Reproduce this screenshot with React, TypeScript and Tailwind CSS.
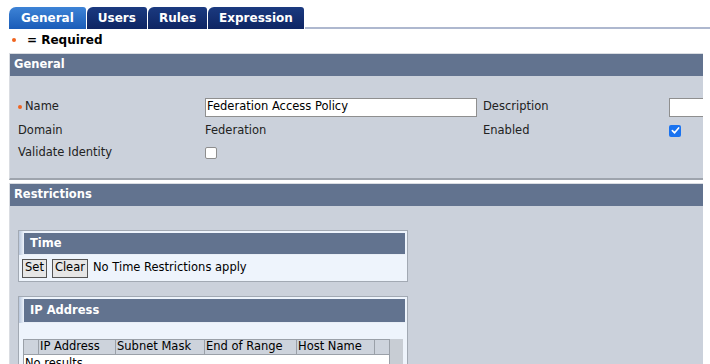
import React from 'react';

const tabs = ['General', 'Users', 'Rules', 'Expression'];

function Tabs() {
    return (
        <div className="flex items-end pl-[9px] pt-[6px] h-[29px] text-[12px]">
            {tabs.map((t, i) => (
                <div
                    key={t}
                    className={
                        i === 0
                            ? 'h-[22px] px-[12px] flex items-center rounded-tl-[7px] rounded-tr-[3px] bg-[linear-gradient(#3d83d6,#1a5cb8)] text-white font-bold mr-px'
                            : 'h-[22px] px-[11px] flex items-center rounded-tl-[6px] rounded-tr-[3px] bg-[linear-gradient(#1b3a80,#0e2563)] text-white font-bold mr-px'
                    }
                >
                    {t}
                </div>
            ))}
            <div className="flex-1 h-[22px] border-b-2 border-[#aeb8cf]" />
        </div>
    );
}

function Checkbox({ checked }: { checked?: boolean }) {
    if (checked) {
        return (
            <span className="w-[12px] h-[12px] rounded-[2px] bg-[#1a73f0] flex items-center justify-center">
                <svg width="9" height="9" viewBox="0 0 10 10">
                    <path d="M1.5 5.2 L4 7.6 L8.5 2.2" fill="none" stroke="white" strokeWidth="1.8" strokeLinecap="round" strokeLinejoin="round" />
                </svg>
            </span>
        );
    }
    return <span className="w-[12px] h-[12px] rounded-[2px] bg-white border border-[#8e8e8e]" />;
}

function SubPanel({ title, headH, children }: { title: string; headH: string; children: React.ReactNode }) {
    return (
        <div className="w-[390px] border border-[#a2a9b3] bg-[#eef4fc]">
            <div className="pt-[2px] pr-[2px] pl-[5px] bg-[linear-gradient(to_right,#b9c7dc,#eef4fc_5px)]">
                <div className={`${headH} bg-[#62738f] flex items-center pl-[6px] text-white font-bold border-b border-[#e8eef6]`}>
                    {title}
                </div>
            </div>
            {children}
        </div>
    );
}

export default function App() {
    return (
        <div className="w-[710px] h-[364px] overflow-hidden bg-white text-[11.5px] text-[#222] font-['DejaVu_Sans',Verdana,sans-serif]">
            <Tabs />

            <div className="h-[24px] flex items-center pl-[12px] pb-[2px] font-bold text-black text-[12px]">
                <span className="w-[4px] h-[4px] rounded-full bg-[#f0641e] mr-[11px]" />
                = Required
            </div>

            {/* General */}
            <div className="ml-[9px] w-[694px] border-l border-t border-[#dadde2] border-b-2 border-b-[#9ea4ad] overflow-hidden">
                <div className="h-[22px] bg-[#62738f] flex items-center pl-[4px] text-white font-bold">General</div>
                <div className="bg-[#cbd1db] pt-[19px] pb-[14px] pl-[8px]">
                    <div className="grid grid-cols-[187px_278px_186px_1fr]">
                        <div className="h-[24px] flex items-center">
                            <span className="w-[4px] h-[4px] rounded-full bg-[#f0641e] mr-[3px]" />
                            Name
                        </div>
                        <div className="h-[24px] flex items-center">
                            <div className="w-[272px] h-[19px] bg-white border border-[#8f8f8f] flex items-center pl-[1px] text-black">
                                Federation Access Policy
                            </div>
                        </div>
                        <div className="h-[24px] flex items-center">Description</div>
                        <div className="h-[24px] flex items-center">
                            <div className="w-[60px] h-[19px] bg-white border border-[#8f8f8f]" />
                        </div>

                        <div className="h-[23px] flex items-center">Domain</div>
                        <div className="h-[23px] flex items-center">Federation</div>
                        <div className="h-[23px] flex items-center">Enabled</div>
                        <div className="h-[23px] flex items-center"><Checkbox checked /></div>

                        <div className="h-[22px] flex items-center">Validate Identity</div>
                        <div className="h-[22px] flex items-center"><Checkbox /></div>
                        <div />
                        <div />
                    </div>
                </div>
            </div>

            {/* Restrictions */}
            <div className="mt-[3px] ml-[9px] w-[694px] border-l border-t border-[#dadde2]">
                <div className="h-[22px] bg-[#62738f] flex items-center pl-[4px] text-white font-bold">Restrictions</div>
                <div className="bg-[#cbd1db] h-[200px] pt-[24px] pl-[8px] flex flex-col gap-[14px]">
                    <SubPanel title="Time" headH="h-[22px]">
                        <div className="h-[26px] flex items-center gap-[5px] pl-[3px]">
                            <button className="h-[19px] px-[2px] bg-[#e6e6e6] border border-[#555] leading-none text-black">Set</button>
                            <button className="h-[19px] px-[2px] bg-[#e6e6e6] border border-[#555] leading-none text-black">Clear</button>
                            <span className="text-black">No Time Restrictions apply</span>
                        </div>
                    </SubPanel>

                    <SubPanel title="IP Address" headH="h-[24px]">
                        <div className="pt-[16px] pl-[4px] flex">
                            <div className="w-[367px] border border-[#9aa0a8]">
                                <div className="flex h-[15px] bg-[#cdd3dc] border-b border-[#9aa0a8] leading-none text-black">
                                    <div className="w-[15px] border-r border-[#9aa0a8]" />
                                    <div className="w-[77px] border-r border-[#9aa0a8] flex items-center pl-[1px]">IP Address</div>
                                    <div className="w-[89px] border-r border-[#9aa0a8] flex items-center pl-[1px]">Subnet Mask</div>
                                    <div className="w-[92px] border-r border-[#9aa0a8] flex items-center pl-[1px]">End of Range</div>
                                    <div className="w-[78px] border-r border-[#9aa0a8] flex items-center pl-[1px]">Host Name</div>
                                    <div className="flex-1" />
                                </div>
                                <div className="bg-white h-[20px] pl-[1px] text-black">No results</div>
                            </div>
                            <div className="w-[13px] bg-[#c8cdd4]" />
                        </div>
                    </SubPanel>
                </div>
            </div>
        </div>
    );
}
